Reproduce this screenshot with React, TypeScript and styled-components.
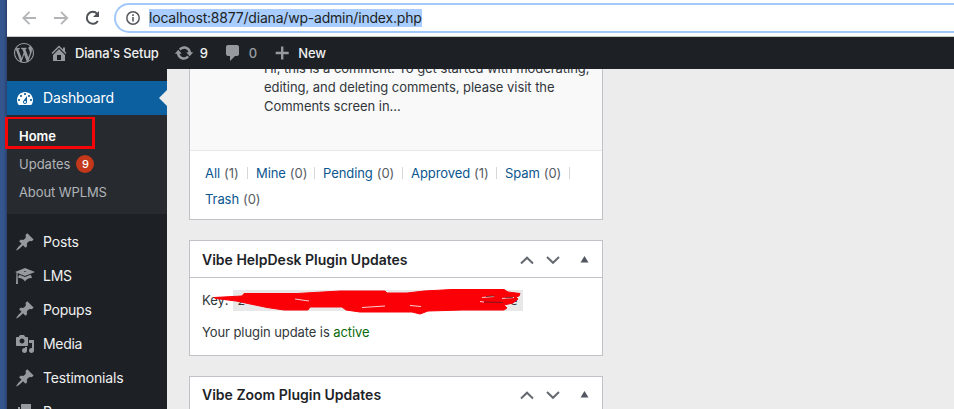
import React from "react";
import styled, { createGlobalStyle, css } from "styled-components";

const GlobalStyle = createGlobalStyle`
  *, *::before, *::after { box-sizing: border-box; }
  html, body { margin: 0; padding: 0; overflow: hidden; }
  body { font-family: Inter, "Liberation Sans", sans-serif; font-size: 13px; color: #32373c; background: #ececec; }
`;

const Screen = styled.div`
  display: flex;
  width: 954px;
  height: 409px;
  overflow: hidden;
`;
const Desktop = styled.div`
  flex: 0 0 7px;
  background: linear-gradient(to right, #35558f 0, #34548b 4px, #29416d 7px);
`;
const Browser = styled.div`
  flex: 1;
  min-width: 0;
  display: flex;
  flex-direction: column;
`;

const Toolbar = styled.div`
  flex: 0 0 37px;
  display: flex;
  align-items: flex-start;
  padding: 3px 0 0 15px;
  background: #fff;
  border-bottom: 1px solid #c8c9cb;
`;
const NavIcon = styled.svg<{ $gap: number; $color: string }>`
  flex: none;
  width: 16px;
  height: 16px;
  margin: 7px ${(p) => p.$gap}px 0 0;
  fill: none;
  stroke: ${(p) => p.$color};
  stroke-width: 1.8;
`;
const AddressBar = styled.div`
  flex: 1;
  height: 30px;
  display: flex;
  align-items: center;
  padding-left: 10px;
  border: 2px solid #a3c9fb;
  border-right: 0;
  border-radius: 15px 0 0 15px;
`;
const InfoIcon = styled.svg`
  width: 14px;
  height: 14px;
  margin-right: 9px;
`;
const Url = styled.span`
  height: 18px;
  line-height: 18px;
  background: #a8cdfe;
  color: #1d1f23;
  font-size: 14px;
  letter-spacing: -0.2px;
  white-space: nowrap;
`;

const AdminBar = styled.div`
  flex: 0 0 32px;
  display: flex;
  align-items: center;
  padding-left: 7px;
  background: #1d2125;
  color: #f0f0f1;
`;
const AdminItem = styled.div<{ $gap: number; $space: number }>`
  display: flex;
  align-items: center;
  gap: ${(p) => p.$space}px;
  margin-right: ${(p) => p.$gap}px;
  font-weight: 450;
`;
const Icon = styled.svg<{ $size?: number; $color?: string }>`
  flex: none;
  display: block;
  width: ${(p) => p.$size ?? 20}px;
  height: ${(p) => p.$size ?? 20}px;
  fill: ${(p) => p.$color ?? "#969a9f"};
  fill-rule: evenodd;
`;
const Label = styled.span<{ $track?: number; $dim?: boolean }>`
  white-space: nowrap;
  letter-spacing: ${(p) => p.$track ?? 0}px;
  ${(p) => p.$dim && css`color: #9a9ea3;`}
`;

const Body = styled.div`
  flex: 1;
  min-height: 0;
  display: flex;
`;
const Sidebar = styled.nav`
  flex: 0 0 160px;
  height: 340px;
  padding-top: 12px;
  background: #1d2125;
`;
const MenuItem = styled.div<{ $active?: boolean }>`
  position: relative;
  height: 34px;
  display: flex;
  align-items: center;
  gap: 8px;
  padding-left: 8px;
  font-size: 14px;
  color: #f0f0f1;
  & > ${Label} {
    padding-bottom: 2px;
  }
  ${(p) =>
    p.$active &&
    css`
      background: #0c609f;
      color: #fff;
      &::after {
        content: "";
        position: absolute;
        right: 0;
        top: 9px;
        border: 8px solid transparent;
        border-left: 0;
        border-right-color: #ececec;
      }
    `}
`;
const SubMenu = styled.div`
  position: relative;
  height: 99px;
  margin-bottom: 11px;
  padding: 7px 0 0 12px;
  background: #272b30;
`;
const SubItem = styled.div<{ $current?: boolean }>`
  height: 28px;
  display: flex;
  align-items: center;
  gap: 6px;
  color: ${(p) => (p.$current ? "#fff" : "#b1b4b8")};
  font-weight: ${(p) => (p.$current ? 600 : 400)};
`;
const Count = styled.span`
  width: 18px;
  height: 18px;
  border-radius: 9px;
  background: #c3381b;
  color: #fff;
  font-size: 11px;
  font-weight: 500;
  line-height: 18px;
  text-align: center;
`;
const Highlight = styled.div`
  position: absolute;
  left: -2px;
  top: 2px;
  width: 90px;
  height: 32px;
  border: 3px solid #f50408;
  border-width: 2px 3px 3px;
`;

const Content = styled.main`
  flex: 1;
  display: flex;
  flex-direction: column;
  gap: 20px;
  padding-left: 22px;
  overflow: hidden;
  background: #ececec;
`;
const Box = styled.section<{ $height: number; $open?: boolean }>`
  flex: none;
  width: 414px;
  height: ${(p) => p.$height}px;
  background: #fff;
  border: 1px solid #bfc3c7;
  ${(p) => p.$open && css`border-top: 0;`}
`;
const Comment = styled.div`
  height: 82px;
  display: flex;
  align-items: flex-end;
  padding: 0 0 34px 74px;
  background: #f9f9f9;
  border-bottom: 1px solid #e6e7e8;
  overflow: hidden;
`;
const CommentText = styled.p`
  margin: 0;
  line-height: 19px;
  letter-spacing: -0.04px;
  white-space: nowrap;
`;
const Filters = styled.div`
  display: flex;
  flex-wrap: wrap;
  padding: 9px 14px 0 15px;
  line-height: 26px;
`;
const Filter = styled.span<{ $width: number }>`
  width: ${(p) => p.$width}px;
  display: flex;
  align-items: center;
  white-space: nowrap;
  color: #565c63;
  letter-spacing: -0.08px;
`;
const Link = styled.a`
  color: #0b568f;
  margin-right: 4px;
`;
const Divider = styled.i`
  width: 1px;
  height: 12px;
  margin: 0 8px 0 auto;
  background: #d5d6d9;
`;
const BoxHeader = styled.header<{ $raised?: boolean }>`
  height: 37px;
  display: flex;
  align-items: center;
  padding: ${(p) => (p.$raised ? "0 12px 1px" : "1px 12px 0")};
  border-bottom: 1px solid #bfc3c7;
`;
const Title = styled.h2<{ $track: number }>`
  flex: 1;
  margin: 0;
  font-size: 14px;
  font-weight: 600;
  color: #1d2327;
  letter-spacing: ${(p) => p.$track}px;
`;
const Controls = styled.svg`
  width: 70px;
  height: 12px;
  fill: none;
  stroke: #646a70;
  stroke-width: 2;
`;
const BoxBody = styled.div`
  padding: 11px 12px 0;
`;
const KeyRow = styled.div`
  position: relative;
  height: 22px;
  display: flex;
  align-items: center;
  gap: 4px;
`;
const Code = styled.code`
  width: 290px;
  height: 21px;
  display: flex;
  justify-content: space-between;
  padding: 0 5px;
  line-height: 21px;
  font-family: "DejaVu Sans Mono", monospace;
  font-size: 13px;
  background: #e8e8e9;
`;
const Scribble = styled.svg`
  position: absolute;
  left: 0;
  top: 0;
  width: 330px;
  height: 30px;
  overflow: visible;
`;
const Status = styled.p`
  margin: 11px 0 0;
  line-height: 20px;
  letter-spacing: -0.08px;
`;
const Active = styled.span`
  color: #0a6a0a;
`;

const icons = {
  wordpress:
    "M20 10c0-5.51-4.49-10-10-10C4.48 0 0 4.49 0 10c0 5.52 4.48 10 10 10 5.51 0 10-4.48 10-10zM7.78 15.37L4.37 6.22c.55-.02 1.17-.08 1.17-.08.5-.06.44-1.13-.06-1.11 0 0-1.45.11-2.37.11-.18 0-.37 0-.58-.01C4.12 2.69 6.87 1.11 10 1.11c2.33 0 4.45.87 6.05 2.34-.68-.11-1.65.39-1.65 1.58 0 .74.45 1.36.9 2.1.35.61.55 1.36.55 2.46 0 1.49-1.4 5-1.4 5l-3.03-8.37c.54-.02.82-.17.82-.17.5-.05.44-1.25-.06-1.22 0 0-1.44.12-2.38.12-.87 0-2.33-.12-2.33-.12-.5-.03-.56 1.2-.06 1.22l.92.08 1.26 3.41zM17.41 10c.24-.64.74-1.87.43-4.25.7 1.29 1.05 2.71 1.05 4.25 0 3.29-1.73 6.24-4.4 7.78.97-2.59 1.94-5.2 2.92-7.78zM6.1 18.09C3.12 16.65 1.11 13.53 1.11 10c0-1.3.23-2.48.72-3.59C3.25 10.3 4.67 14.2 6.1 18.09zm4.03-6.63l2.58 6.98c-.86.29-1.76.45-2.71.45-.79 0-1.57-.11-2.29-.33.81-2.38 1.62-4.74 2.42-7.1z",
  home: "M16 8.5l1.53 1.53-1.06 1.06L10 4.6l-6.47 6.49-1.06-1.06L10 2.5l4 4v-2h2v4zm-6-2.46l6 5.99V18H4v-5.97zM12 17v-5H8v5h4z",
  update:
    "M10.2 3.28c3.53 0 6.43 2.61 6.92 6h2.08l-3.5 4-3.5-4h2.32c-.45-1.97-2.21-3.45-4.32-3.45-1.45 0-2.73.71-3.54 1.78L4.95 5.66C6.23 4.2 8.11 3.28 10.2 3.28zm-.4 13.44c-3.52 0-6.43-2.61-6.92-6H.8l3.5-4c1.17 1.33 2.33 2.67 3.5 4H5.48c.45 1.97 2.21 3.45 4.32 3.45 1.45 0 2.73-.71 3.54-1.78l1.71 1.95c-1.28 1.46-3.15 2.38-5.25 2.38z",
  comment:
    "M5 2h9c1.1 0 2 .9 2 2v7c0 1.1-.9 2-2 2h-2l-5 5v-5H5c-1.1 0-2-.9-2-2V4c0-1.1.9-2 2-2z",
  plus: "M9 3.5h2.4v5.3h5.3v2.4h-5.3v5.3H9v-5.3H3.7V8.8H9z",
  dashboard:
    "M3.76 17h12.48c1.1-1.37 1.76-3.11 1.76-5 0-4.42-3.58-8-8-8s-8 3.58-8 8c0 1.89.66 3.63 1.76 5zM10 5c.55 0 1 .45 1 1s-.45 1-1 1-1-.45-1-1 .45-1 1-1zM6 7c.55 0 1 .45 1 1s-.45 1-1 1-1-.45-1-1 .45-1 1-1zm8 0c.55 0 1 .45 1 1s-.45 1-1 1-1-.45-1-1 .45-1 1-1zm-5.37 5.55L12 8v6c0 1.1-.9 2-2 2s-2-.9-2-2c0-.57.24-1.08.63-1.45zM4 11c.55 0 1 .45 1 1s-.45 1-1 1-1-.45-1-1 .45-1 1-1zm12 0c.55 0 1 .45 1 1s-.45 1-1 1-1-.45-1-1 .45-1 1-1zm-5 3c0-.55-.45-1-1-1s-1 .45-1 1 .45 1 1 1 1-.45 1-1z",
  pin: "M10.44 3.02l1.82-1.82 6.36 6.35-1.83 1.82c-1.05-.68-2.48-.57-3.41.36l-.75.75c-.92.93-1.04 2.35-.35 3.41l-1.83 1.82-2.41-2.41-2.8 2.79c-.42.42-3.38 2.71-3.8 2.29s1.86-3.39 2.28-3.81l2.79-2.79L4.1 9.36l1.83-1.82c1.05.69 2.48.57 3.4-.36l.75-.75c.93-.92 1.05-2.35.36-3.41z",
  learn:
    "M10 10L2.54 7.02 3 18H1l.48-11.41L0 6l10-4 10 4zm0-5c-.55 0-1 .22-1 .5s.45.5 1 .5 1-.22 1-.5-.45-.5-1-.5zm0 6l5.57-2.23c.71.94 1.2 2.07 1.36 3.3-.3-.04-.61-.07-.93-.07-2.55 0-4.78 1.37-6 3.41C8.78 13.37 6.55 12 4 12c-.32 0-.63.03-.93.07.16-1.23.65-2.36 1.36-3.3z",
  media:
    "M13 11V4c0-.55-.45-1-1-1h-1.67L9 1H5L3.67 3H2c-.55 0-1 .45-1 1v7c0 .55.45 1 1 1h10c.55 0 1-.45 1-1zM7 4.5c1.38 0 2.5 1.12 2.5 2.5S8.38 9.5 7 9.5 4.5 8.38 4.5 7 5.62 4.5 7 4.5zM14 6h5v10.500c0 1.38-1.12 2.5-2.5 2.500S14 17.88 14 16.500s1.12-2.5 2.5-2.5c.17 0 .34.02.5.05V9h-3V6zm-4 8.050V13h2v3.500c0 1.380-1.120 2.500-2.500 2.500S7 17.880 7 16.500 8.120 14 9.500 14c.17 0 .34.02.5.05z",
  page: "M6 15V2h10v13H6zm-1 1h8v2H3V5h2v11z",
};

type GlyphProps = { name: keyof typeof icons; size?: number; color?: string };
const Glyph = ({ name, size, color }: GlyphProps) => (
  <Icon viewBox="0 0 20 20" $size={size} $color={color}>
    <path d={icons[name]} />
  </Icon>
);

const menu: { icon: keyof typeof icons; label: string; track: number }[] = [
  { icon: "pin", label: "Posts", track: -0.15 },
  { icon: "learn", label: "LMS", track: -0.25 },
  { icon: "pin", label: "Popups", track: -0.25 },
  { icon: "media", label: "Media", track: -0.3 },
  { icon: "pin", label: "Testimonials", track: -0.17 },
  { icon: "page", label: "Pages", track: -0.25 },
];

const filters = [
  { label: "All", count: 1, width: 51 },
  { label: "Mine", count: 0, width: 67 },
  { label: "Pending", count: 0, width: 88 },
  { label: "Approved", count: 1, width: 94 },
  { label: "Spam", count: 0, width: 73 },
  { label: "Trash", count: 0, width: 60 },
];

const BoxControls = () => (
  <Controls viewBox="0 0 70 12">
    <path d="M1 9.5 7 3.7l6 5.8M27 3l6 5.8L39 3" />
    <path d="M60.500 8.500 64.500 2 68.500 8.500z" fill="#50575e" stroke="none" />
  </Controls>
);

export default function App() {
  return (
    <>
      <GlobalStyle />
      <Screen>
        <Desktop />
        <Browser>
          <Toolbar>
            <NavIcon viewBox="0 0 16 16" $gap={16} $color="#b3b4b6">
              <path d="M14 8H1.500M7.500 1.800 1.300 8l6.200 6.200" />
            </NavIcon>
            <NavIcon viewBox="0 0 16 16" $gap={15} $color="#b3b4b6">
              <path d="M0 8h13M7 1.800 13.200 8 7 14.200" />
            </NavIcon>
            <NavIcon viewBox="0 0 16 16" $gap={13} $color="#505357">
              <path d="M12.900 11A6 6 0 1 1 12.300 3.800" strokeWidth="2" />
              <path d="M14 1v6H8z" fill="#505357" stroke="none" />
            </NavIcon>
            <AddressBar>
              <InfoIcon viewBox="0 0 14 14">
                <circle cx="7" cy="7" r="6.200" fill="none" stroke="#55585c" strokeWidth="1.500" />
                <path d="M6.200 6h1.600v4.500H6.200zM6.200 3.300h1.600v1.600H6.200z" fill="#55585c" />
              </InfoIcon>
              <Url>localhost:8877/diana/wp-admin/index.php</Url>
            </AddressBar>
          </Toolbar>

          <AdminBar>
            <AdminItem $gap={15} $space={0}>
              <Glyph name="wordpress" />
            </AdminItem>
            <AdminItem $gap={15} $space={6}>
              <Glyph name="home" />
              <Label $track={-0.18}>Diana's Setup</Label>
            </AdminItem>
            <AdminItem $gap={15} $space={6}>
              <Glyph name="update" />
              <Label>9</Label>
            </AdminItem>
            <AdminItem $gap={15} $space={6}>
              <Glyph name="comment" />
              <Label $dim>0</Label>
            </AdminItem>
            <AdminItem $gap={0} $space={6}>
              <Glyph name="plus" />
              <Label $track={-0.1}>New</Label>
            </AdminItem>
          </AdminBar>

          <Body>
            <Sidebar>
              <MenuItem $active>
                <Glyph name="dashboard" color="#fff" />
                <Label $track={-0.15}>Dashboard</Label>
              </MenuItem>
              <SubMenu>
                <SubItem $current>
                  <Label>Home</Label>
                </SubItem>
                <SubItem>
                  <Label>Updates</Label>
                  <Count>9</Count>
                </SubItem>
                <SubItem>
                  <Label $track={-0.1}>About WPLMS</Label>
                </SubItem>
                <Highlight />
              </SubMenu>
              {menu.map((item) => (
                <MenuItem key={item.label}>
                  <Glyph name={item.icon} />
                  <Label $track={item.track}>{item.label}</Label>
                </MenuItem>
              ))}
            </Sidebar>

            <Content>
              <Box $height={151} $open>
                <Comment>
                  <CommentText>
                    Hi, this is a comment. To get started with moderating,
                    <br />
                    editing, and deleting comments, please visit the
                    <br />
                    Comments screen in...
                  </CommentText>
                </Comment>
                <Filters>
                  {filters.map((f, i) => (
                    <Filter key={f.label} $width={f.width}>
                      <Link>{f.label}</Link>({f.count})
                      {i < filters.length - 1 && <Divider />}
                    </Filter>
                  ))}
                </Filters>
              </Box>

              <Box $height={116}>
                <BoxHeader>
                  <Title $track={0}>Vibe HelpDesk Plugin Updates</Title>
                  <BoxControls />
                </BoxHeader>
                <BoxBody>
                  <KeyRow>
                    <Label>Key:</Label>
                    <Code>
                      <span>2</span>
                      <span>e</span>
                    </Code>
                    <Scribble viewBox="0 0 330 30">
                      <path
                        fill="#fb0007"
                        stroke="#fb0007"
                        strokeLinejoin="round"
                        d="M12 8.500 40 7 42 4.500 95 4.500 138 2 183 2 185 4 205 4 222 2 250 .500 302 .500 306 3 318 4.500 317 7 314 8 316 10 311 14 302 16 305 19 302 21 260 21 226 22 218 25 210 23 158 23 144 21 140 18 108 18 106 21 82 21 65 18.500 34 12 14 9.500z"
                      />
                      <path
                        fill="none"
                        stroke="#f8d0d2"
                        strokeWidth="1"
                        d="M93 10l14 2M160 18.500l23-1.500M208 16.500l11 1M278 12.500l4 .5M280 8.500l12-1M300 9.500l12-1"
                      />
                      <path
                        fill="none"
                        stroke="#5c2022"
                        strokeWidth=".8"
                        d="M282 13l19 .5M284 7.500l8-.5M303 8.800l8-.5"
                      />
                    </Scribble>
                  </KeyRow>
                  <Status>
                    Your plugin update is <Active>active</Active>
                  </Status>
                </BoxBody>
              </Box>

              <Box $height={116}>
                <BoxHeader $raised>
                  <Title $track={0}>Vibe Zoom Plugin Updates</Title>
                  <BoxControls />
                </BoxHeader>
              </Box>
            </Content>
          </Body>
        </Browser>
      </Screen>
    </>
  );
}
